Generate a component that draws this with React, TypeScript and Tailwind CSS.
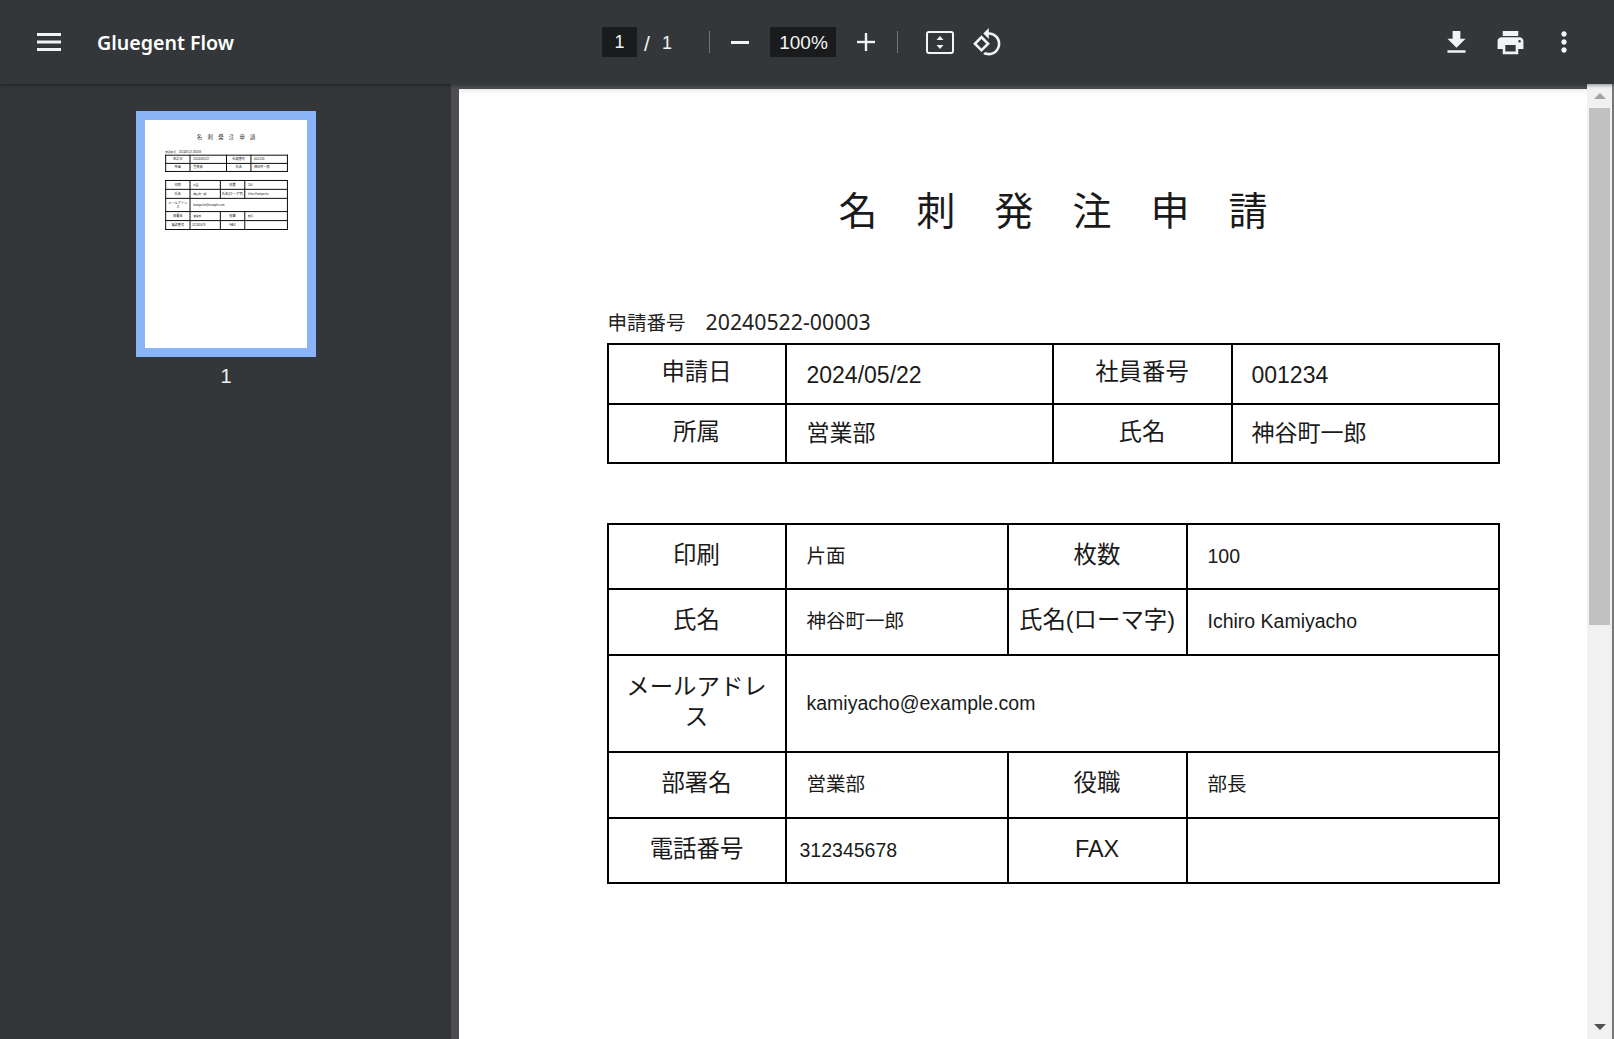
const ROTATE =
  "M7.34 6.41L.86 12.9l6.49 6.48 6.49-6.48-6.5-6.49zM3.69 12.9l3.66-3.66L11 12.9l-3.66 3.66-3.65-3.66zm15.67-6.26C17.61 4.88 15.3 4 13 4V.76L8.76 5 13 9.24V6c1.79 0 3.58.68 4.95 2.05 2.73 2.73 2.73 7.17 0 9.9C16.58 19.32 14.79 20 13 20c-.97 0-1.94-.21-2.84-.61l-1.49 1.49C10.02 21.62 11.51 22 13 22c2.3 0 4.61-.88 6.36-2.64 3.52-3.51 3.52-9.21 0-12.72z";
const DOWNLOAD = "M19 9h-4V3H9v6H5l7 7 7-7zM5 18v2h14v-2H5z";
const PRINT =
  "M19 8H5c-1.66 0-3 1.34-3 3v6h4v4h12v-4h4v-6c0-1.66-1.34-3-3-3zm-3 11H8v-5h8v5zm3-7c-.55 0-1-.45-1-1s.45-1 1-1 1 .45 1 1-.45 1-1 1zm-1-9H6v4h12V3z";
const MORE =
  "M12 8c1.1 0 2-.9 2-2s-.9-2-2-2-2 .9-2 2 .9 2 2 2zm0 2c-1.1 0-2 .9-2 2s.9 2 2 2 2-.9 2-2-.9-2-2-2zm0 6c-1.1 0-2 .9-2 2s.9 2 2 2 2-.9 2-2-.9-2-2-2z";

const Icon = ({ d, className }: { d: string; className: string }) => (
  <svg viewBox="0 0 24 24" fill="#f1f3f4" className={className}>
    <path d={d} />
  </svg>
);

const Toolbar = () => (
  <header className="relative z-10 flex h-[84px] shrink-0 items-center bg-[#34373a] text-[#f1f3f4] shadow-[0_1px_4px_rgba(0,0,0,0.45)]">
    <div className="flex w-[602px] shrink-0 items-center pl-[37px]">
      <svg width="24" height="18" viewBox="0 0 24 18" fill="#f1f3f4">
        <rect width="24" height="3" />
        <rect y="7.5" width="24" height="3" />
        <rect y="15" width="24" height="3" />
      </svg>
      <span className="mt-[2px] ml-[36px] font-['Noto_Sans',sans-serif] text-[19.6px] font-semibold text-white">Gluegent Flow</span>
    </div>
    <div className="flex h-[30px] w-[35px] items-center justify-center bg-[#191b1c] text-[18px]">1</div>
    <span className="mt-[3px] ml-[7px] w-[8px] text-[21px]">/</span>
    <span className="mt-[2px] ml-[10px] w-[10px] text-[18px]">1</span>
    <div className="ml-[37px] h-[22px] w-px bg-[#70757a]" />
    <div className="ml-[21px] h-[3px] w-[18px] bg-[#f1f3f4]" />
    <div className="ml-[21px] flex h-[30px] w-[66px] items-center justify-center bg-[#191b1c] text-[19px]">
      <span className="mt-[2px] ml-[1px]">100%</span>
    </div>
    <svg className="ml-[21px]" width="18" height="18" viewBox="0 0 18 18" fill="#f1f3f4">
      <rect y="7.8" width="18" height="2.4" />
      <rect x="7.8" width="2.4" height="18" />
    </svg>
    <div className="ml-[22px] h-[22px] w-px bg-[#70757a]" />
    <svg className="ml-[28px]" width="28" height="23" viewBox="0 0 28 23" fill="#f1f3f4">
      <rect x="1" y="1" width="26" height="21" rx="2" fill="none" stroke="#f1f3f4" strokeWidth="2" />
      <path d="M14 5l3.5 4h-7zM14 18l-3.5-4h7z" />
    </svg>
    <Icon d={ROTATE} className="ml-[18px] h-[31px] w-[31px]" />
    <div className="ml-auto flex items-center pr-[34px]">
      <Icon d={DOWNLOAD} className="h-[31px] w-[31px]" />
      <Icon d={PRINT} className="ml-[23px] h-[31px] w-[31px]" />
      <Icon d={MORE} className="ml-[22px] h-[32px] w-[32px]" />
    </div>
  </header>
);

const Doc = ({ thumb }: { thumb?: boolean }) => {
  const line = thumb ? "border-[7px] border-black" : "border-2 border-black";
  const label = `${line} px-1 pb-[4px] text-center text-[23.4px] leading-[30px]`;
  const value = `${line} pl-[20px] text-[23px]`;
  const last = `${line} pl-[19px] text-[23px]`;
  const small = `${line} pl-[20px] text-[19.5px]`;

  return (
    <div
      className={`h-[1680px] w-[1188px] bg-white pt-[93px] text-[#1a1a1a] ${thumb ? "" : "shadow-[inset_0_7px_6px_-6px_rgba(0,0,0,0.12)]"}`}
    >
      <h1 className="text-center text-[39px] leading-[60px]">名　刺　発　注　申　請</h1>

      <div className="mx-auto w-[893px]">
        <p className="mt-[61px] h-[38px] pl-px text-[19.5px] leading-[38px] text-[#222]">
          申請番号
          <span className="ml-[20px] font-['Noto_Sans',sans-serif] text-[21.3px]">20240522-00003</span>
        </p>
        <table className="mt-[2px] w-[891px] table-fixed border-collapse">
          <colgroup>
            <col className="w-[178px]" />
            <col className="w-[267px]" />
            <col className="w-[179px]" />
            <col className="w-[267px]" />
          </colgroup>
          <tbody>
            <tr className="h-[60px]">
              <td className={label}>申請日</td>
              <td className={`${value} pt-[2px]`}>2024/05/22</td>
              <td className={label}>社員番号</td>
              <td className={`${last} pt-[2px]`}>001234</td>
            </tr>
            <tr className="h-[59px]">
              <td className={label}>所属</td>
              <td className={value}>営業部</td>
              <td className={label}>氏名</td>
              <td className={last}>神谷町一郎</td>
            </tr>
          </tbody>
        </table>

        <table className="mt-[59px] w-[891px] table-fixed border-collapse">
          <colgroup>
            <col className="w-[178px]" />
            <col className="w-[222px]" />
            <col className="w-[179px]" />
            <col className="w-[312px]" />
          </colgroup>
          <tbody>
            <tr className="h-[65px]">
              <td className={label}>印刷</td>
              <td className={small}>片面</td>
              <td className={label}>枚数</td>
              <td className={small}>100</td>
            </tr>
            <tr className="h-[66px]">
              <td className={label}>氏名</td>
              <td className={small}>神谷町一郎</td>
              <td className={`${label} whitespace-nowrap`}>氏名(ローマ字)</td>
              <td className={small}>Ichiro Kamiyacho</td>
            </tr>
            <tr className="h-[97px]">
              <td className={label}>
                メールアドレ
                <br />ス
              </td>
              <td className={small} colSpan={3}>
                kamiyacho@example.com
              </td>
            </tr>
            <tr className="h-[66px]">
              <td className={label}>部署名</td>
              <td className={small}>営業部</td>
              <td className={label}>役職</td>
              <td className={small}>部長</td>
            </tr>
            <tr className="h-[65px]">
              <td className={label}>電話番号</td>
              <td className={`${line} pl-[13px] text-[19.5px]`}>312345678</td>
              <td className={label}>FAX</td>
              <td className={line} />
            </tr>
          </tbody>
        </table>
      </div>
    </div>
  );
};

const Sidebar = () => (
  <aside className="flex w-[451px] shrink-0 flex-col items-center bg-[#34373a] pt-[27px] text-[#f1f3f4]">
    <div className="ml-[1px] border-[9px] border-[#8ab4f8]">
      <div className="h-[228px] w-[162px] overflow-hidden bg-white">
        <div className="origin-top-left scale-[0.1366]">
          <Doc thumb />
        </div>
      </div>
    </div>
    <span className="mt-[7px] ml-[1px] text-[20px] leading-[24px]">1</span>
  </aside>
);

const Scrollbar = () => (
  <div className="flex w-[27px] shrink-0 border-r-2 border-[#777] bg-[#f1f1f1]">
    <div className="flex w-[25px] flex-col items-center">
      <div className="flex h-[24px] w-full items-center justify-center">
        <div className="h-0 w-0 border-x-[6px] border-b-[6px] border-x-transparent border-b-[#a3a3a3]" />
      </div>
      <div className="h-[517px] w-[21px] bg-[#c1c1c1]" />
      <div className="mt-auto flex h-[24px] w-full items-center justify-center">
        <div className="h-0 w-0 border-x-[6px] border-t-[6px] border-x-transparent border-t-[#505050]" />
      </div>
    </div>
  </div>
);

export default function App() {
  return (
    <div className="flex h-screen w-full flex-col overflow-hidden bg-[#34373a] font-['Liberation_Sans','Noto_Sans_CJK_JP',sans-serif]">
      <Toolbar />
      <div className="flex min-h-0 flex-1">
        <Sidebar />
        <main className="min-w-0 flex-1 overflow-hidden bg-[#4b4d50] pt-[5px] pl-[8px]">
          <Doc />
        </main>
        <Scrollbar />
      </div>
    </div>
  );
}
